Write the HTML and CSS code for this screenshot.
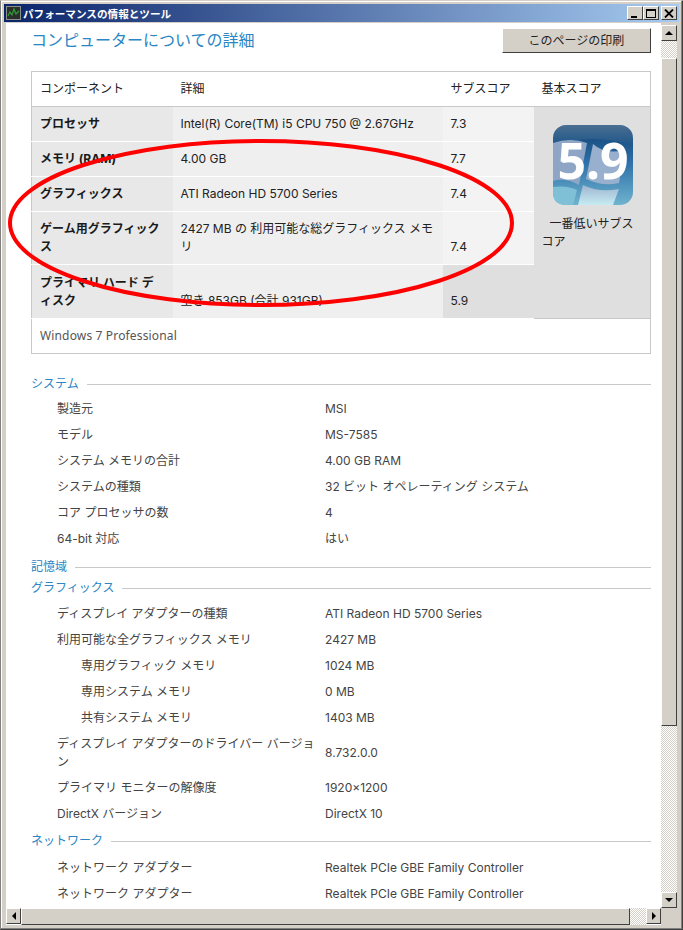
FILE: index.html
```html
<!DOCTYPE html>
<html lang="ja">
<head>
    <meta charset="UTF-8">
    <title>パフォーマンスの情報とツール</title>
    <link rel="stylesheet" href="styles.css">
</head>
<body>
    <div class="window">
        <div class="titlebar">
            <svg class="app-icon" width="15" height="14" viewBox="0 0 15 14">
                <rect x="0.5" y="0.5" width="14" height="13" fill="#2b2f2b" stroke="#8a8f8a"/>
                <path d="M2 10 L4 6 L6 9 L8 3 L10 8 L13 5" fill="none" stroke="#2f9e35" stroke-width="1.2"/>
            </svg>
            <span class="title-text">パフォーマンスの情報とツール</span>
            <div class="caption-buttons">
                <div class="caption-btn"><span class="glyph-min"></span></div>
                <div class="caption-btn"><span class="glyph-max"></span></div>
                <div class="caption-btn caption-close">
                    <svg width="10" height="9" viewBox="0 0 10 9"><path d="M1 0.5 L9 8.5 M9 0.5 L1 8.5" stroke="#000" stroke-width="1.8"/></svg>
                </div>
            </div>
        </div>

        <div class="client">
            <div class="main-row">
                <div class="content">
                    <div class="page-head">
                        <h1 class="page-title">コンピューターについての詳細</h1>
                        <div class="print-btn">このページの印刷</div>
                    </div>

                    <!-- スコア表 -->
                    <table class="score-table">
                        <colgroup>
                            <col class="col-name"><col class="col-detail"><col class="col-sub"><col class="col-base">
                        </colgroup>
                        <tr class="head-row">
                            <td>コンポーネント</td><td>詳細</td><td>サブスコア</td><td>基本スコア</td>
                        </tr>
                        <tr class="row-short">
                            <td class="name">プロセッサ</td>
                            <td class="detail">Intel(R) Core(TM) i5 CPU 750 @ 2.67GHz</td>
                            <td class="sub">7.3</td>
                            <td class="base" rowspan="5">
                                <svg class="score-logo" width="80" height="80" viewBox="0 0 80 80">
                                    <defs>
                                        <linearGradient id="tile" x1="0" y1="0" x2="0" y2="1">
                                            <stop offset="0" stop-color="#0f3f6e"/>
                                            <stop offset="0.45" stop-color="#2c6ea6"/>
                                            <stop offset="1" stop-color="#6fb3cf"/>
                                        </linearGradient>
                                        <linearGradient id="pane" x1="0" y1="0" x2="0" y2="1">
                                            <stop offset="0" stop-color="#9fb4cf"/>
                                            <stop offset="1" stop-color="#c6ecf2"/>
                                        </linearGradient>
                                        <linearGradient id="shine" x1="0" y1="0" x2="0" y2="1">
                                            <stop offset="0" stop-color="#ffffff" stop-opacity="0.25"/>
                                            <stop offset="1" stop-color="#ffffff" stop-opacity="0"/>
                                        </linearGradient>
                                    </defs>
                                    <rect width="80" height="80" rx="13" fill="url(#tile)"/>
                                    <path d="M0 18 Q18 12 34 18 L26 60 Q12 52 0 56 Z" fill="#8ea5c6"/>
                                    <path d="M40 19 Q52 30 72 25 L66 58 Q50 62 33 54 Z" fill="#98afce"/>
                                    <path d="M24 65 Q14 60 0 62 L0 68 Q0 80 13 80 L20 80 Z" fill="#7fc0d6"/>
                                    <path d="M30 60 Q46 68 66 64 L60 80 L25 80 Z" fill="url(#pane)"/>
                                    <path d="M0 13 Q0 0 13 0 H67 Q80 0 80 13 V20 Q40 8 0 20 Z" fill="url(#shine)"/>
                                    <text x="40" y="54" class="logo-score">5.9</text>
                                </svg>
                                <p class="base-note">一番低いサブスコア</p>
                            </td>
                        </tr>
                        <tr class="row-short">
                            <td class="name">メモリ (RAM)</td><td class="detail">4.00 GB</td><td class="sub">7.7</td>
                        </tr>
                        <tr class="row-short">
                            <td class="name">グラフィックス</td><td class="detail">ATI Radeon HD 5700 Series</td><td class="sub">7.4</td>
                        </tr>
                        <tr class="row-tall">
                            <td class="name">ゲーム用グラフィックス</td>
                            <td class="detail">2427 MB の 利用可能な総グラフィックス メモリ</td>
                            <td class="sub sub-bottom">7.4</td>
                        </tr>
                        <tr class="row-tall row-disk">
                            <td class="name">プライマリ ハード ディスク</td>
                            <td class="detail sub-bottom">空き 853GB (合計 931GB)</td>
                            <td class="sub sub-bottom sub-low">5.9</td>
                        </tr>
                        <tr class="foot-row">
                            <td colspan="4">Windows 7 Professional</td>
                        </tr>
                    </table>

                    <!-- 詳細リスト -->
                    <div class="sections">
                        <div class="sec-head sec-first"><span>システム</span></div>
                        <div class="info-row"><span>製造元</span><span>MSI</span></div>
                        <div class="info-row"><span>モデル</span><span>MS-7585</span></div>
                        <div class="info-row"><span>システム メモリの合計</span><span>4.00 GB RAM</span></div>
                        <div class="info-row"><span>システムの種類</span><span>32 ビット オペレーティング システム</span></div>
                        <div class="info-row"><span>コア プロセッサの数</span><span>4</span></div>
                        <div class="info-row"><span>64-bit 対応</span><span>はい</span></div>

                        <div class="sec-head sec-plain"><span>記憶域</span></div>
                        <div class="sec-head sec-tight"><span>グラフィックス</span></div>
                        <div class="info-row"><span>ディスプレイ アダプターの種類</span><span>ATI Radeon HD 5700 Series</span></div>
                        <div class="info-row"><span>利用可能な全グラフィックス メモリ</span><span>2427 MB</span></div>
                        <div class="info-row info-sub"><span>専用グラフィック メモリ</span><span>1024 MB</span></div>
                        <div class="info-row info-sub"><span>専用システム メモリ</span><span>0 MB</span></div>
                        <div class="info-row info-sub"><span>共有システム メモリ</span><span>1403 MB</span></div>
                        <div class="info-row info-wrap"><span>ディスプレイ アダプターのドライバー バージョン</span><span>8.732.0.0</span></div>
                        <div class="info-row"><span>プライマリ モニターの解像度</span><span>1920x1200</span></div>
                        <div class="info-row"><span>DirectX バージョン</span><span>DirectX 10</span></div>

                        <div class="sec-head sec-last"><span>ネットワーク</span></div>
                        <div class="info-row"><span>ネットワーク アダプター</span><span>Realtek PCIe GBE Family Controller</span></div>
                        <div class="info-row"><span>ネットワーク アダプター</span><span>Realtek PCIe GBE Family Controller</span></div>
                    </div>
                </div>

                <div class="vscroll">
                    <div class="sb-btn"><span class="arrow arrow-up"></span></div>
                    <div class="sb-track sb-track-top"></div>
                    <div class="sb-thumb sb-thumb-v"></div>
                    <div class="sb-track sb-fill"></div>
                    <div class="sb-btn"><span class="arrow arrow-down"></span></div>
                </div>
            </div>

            <div class="hscroll">
                <div class="sb-btn sb-btn-h"><span class="arrow arrow-left"></span></div>
                <div class="sb-thumb sb-thumb-h"></div>
                <div class="sb-track sb-fill"></div>
                <div class="sb-btn sb-btn-h"><span class="arrow arrow-right"></span></div>
                <div class="sb-corner"></div>
            </div>
        </div>

        <!-- 赤い丸印 -->
        <svg class="red-mark" width="683" height="930" viewBox="0 0 683 930">
            <ellipse cx="261" cy="222" rx="251" ry="82" fill="none" stroke="#ff0000" stroke-width="4"/>
        </svg>
    </div>
</body>
</html>
```

FILE: styles.css
```css
* {
    box-sizing: border-box;
    margin: 0;
    padding: 0;
}
html, body {
    width: 683px;
    height: 930px;
    overflow: hidden;
    font-family: "Inter", "Noto Sans CJK JP", sans-serif;
    font-size: 12px;
    color: #222;
}
.window {
    position: relative;
    width: 683px;
    height: 930px;
    display: flex;
    flex-direction: column;
    background-color: #d4d0c8;
    border: 1px solid #404040;
    border-top-color: #d4d0c8;
    border-left-color: #808080;
    padding: 3px 3px 4px 3px;
    box-shadow: inset -1px -1px 0 #808080, inset 1px 1px 0 #ffffff;
}

/* タイトルバー */
.titlebar {
    height: 18px;
    flex: none;
    display: flex;
    align-items: center;
    padding: 0 2px 0 2px;
    background: linear-gradient(to right, #0a246a, #a6caf0);
}
.app-icon {
    flex: none;
    margin-right: 2px;
}
.title-text {
    color: #fff;
    font-weight: bold;
    font-size: 10.6px;
    font-family: "Noto Sans CJK JP", sans-serif;
}
.caption-buttons {
    margin-left: auto;
    display: flex;
}
.caption-btn {
    width: 16px;
    height: 14px;
    display: flex;
    align-items: center;
    justify-content: center;
    background-color: #d4d0c8;
    border: 1px solid;
    border-color: #fff #404040 #404040 #fff;
}
.caption-close {
    margin-left: 2px;
}
.glyph-min {
    width: 6px;
    height: 2px;
    margin-top: 7px;
    margin-right: 2px;
    background-color: #000;
}
.glyph-max {
    width: 10px;
    height: 9px;
    border: 1px solid #000;
    border-top-width: 2px;
}

.client {
    flex: 1;
    min-height: 0;
    display: flex;
    flex-direction: column;
    margin-left: 2px;
}
.main-row {
    flex: 1;
    min-height: 0;
    display: flex;
}
.content {
    flex: 1;
    min-width: 0;
    background-color: #fff;
    padding: 0 9px 0 25px;
    overflow: hidden;
    margin-top: 1px;
}

/* ページ見出し */
.page-head {
    display: flex;
    justify-content: space-between;
    align-items: flex-start;
    width: 620px;
    height: 48px;
}
.page-title {
    font-size: 16px;
    font-weight: normal;
    color: #2a86c4;
    line-height: 24px;
    margin-top: 5px;
}
.print-btn {
    width: 149px;
    height: 25px;
    margin-top: 5px;
    line-height: 23px;
    text-align: center;
    background-color: #d4d0c8;
    border: 1px solid;
    border-color: #fff #404040 #404040 #fff;
    color: #222;
}

/* スコア表 */
.score-table {
    width: 620px;
    table-layout: fixed;
    border-collapse: collapse;
    border: 1px solid #c8c8c8;
}
.col-name { width: 141px; }
.col-detail { width: 270px; }
.col-sub { width: 91px; }
.col-base { width: 117px; }
.score-table td {
    padding: 0 8px;
    line-height: 18px;
    border-bottom: 1px solid #fff;
}
.head-row {
    height: 35px;
}
.head-row td {
    border-bottom: 1px solid #c8c8c8;
}
.row-short { height: 35px; }
.row-tall { height: 53px; }
.row-disk { height: 54px; }
.name {
    background-color: #e8e8e8;
    font-weight: bold;
    color: #1a1a1a;
}
.detail {
    background-color: #efefef;
}
.sub {
    background-color: #f3f3f3;
}
.sub-bottom {
    vertical-align: bottom;
    padding-bottom: 8px !important;
}
.sub-low {
    background-color: #dfdfdf;
}
.score-table .base {
    background-color: #dfdfdf;
    vertical-align: top;
    padding: 18px 8px 0 8px;
    border-bottom: none;
}
.score-logo {
    display: block;
    margin: 0 auto 0 11px;
}
.logo-score {
    font-family: "Noto Sans", sans-serif;
    font-size: 50px;
    font-weight: bold;
    fill: #fff;
    text-anchor: middle;
}
.base-note {
    margin-top: 10px;
    text-indent: 8px;
    line-height: 18px;
}
.foot-row {
    height: 35px;
}
.foot-row td {
    color: #555;
    border-top: 1px solid #c8c8c8;
    border-bottom: none;
    font-family: "Noto Sans", sans-serif;
    letter-spacing: 0.15px;
}

/* 詳細リスト */
.sections {
    width: 620px;
    margin-top: 17px;
    color: #444;
}
.sec-head {
    display: flex;
    align-items: center;
    height: 22px;
    margin-top: 3px;
    margin-bottom: 3px;
    color: #2a86c4;
}
.sec-head::after {
    content: "";
    flex: 1;
    height: 1px;
    margin-left: 8px;
    margin-top: 4px;
    background-color: #c8c8c8;
}
.sec-first {
    margin-top: 0;
}
.sec-plain {
    margin-bottom: 0;
    height: 21px;
}
.sec-tight {
    margin-top: -1px;
    margin-bottom: 4px;
}
.sec-last {
    margin-top: 1px;
    margin-bottom: 5px;
}
.info-row {
    display: grid;
    grid-template-columns: 268px 1fr;
    align-items: center;
    width: 620px;
    min-height: 26px;
    padding-left: 26px;
    line-height: 18px;
}
.info-sub {
    grid-template-columns: 244px 1fr;
    padding-left: 50px;
}
.info-wrap {
    min-height: 44px;
}

/* スクロールバー */
.vscroll {
    width: 16px;
    flex: none;
    display: flex;
    flex-direction: column;
    margin: 3px 2px 0 0;
}
.hscroll {
    height: 17px;
    flex: none;
    display: flex;
    background-color: #fff;
    margin-right: 2px;
}
.sb-btn {
    width: 16px;
    height: 16px;
    flex: none;
    display: flex;
    align-items: center;
    justify-content: center;
    background-color: #d4d0c8;
    border: 1px solid;
    border-color: #fff #404040 #404040 #fff;
}
.sb-btn-h {
    width: 15px;
}
.sb-thumb {
    flex: none;
    background-color: #d4d0c8;
    border: 1px solid;
    border-color: #fff #404040 #404040 #fff;
}
.sb-thumb-v {
    height: 668px;
}
.sb-thumb-h {
    width: 609px;
}
.sb-track {
    background: repeating-conic-gradient(#d4d0c8 0 25%, #fff 0 50%) 0 0 / 2px 2px;
}
.sb-track-top {
    height: 17px;
    flex: none;
}
.sb-fill {
    flex: 1;
}
.sb-corner {
    width: 16px;
    flex: none;
    background-color: #d4d0c8;
}
.arrow {
    width: 0;
    height: 0;
    border-style: solid;
    border-color: transparent;
}
.arrow-up {
    border-width: 0 4px 4px 4px;
    border-bottom-color: #000;
}
.arrow-down {
    border-width: 4px 4px 0 4px;
    border-top-color: #000;
}
.arrow-left {
    border-width: 4px 4px 4px 0;
    border-right-color: #000;
}
.arrow-right {
    border-width: 4px 0 4px 4px;
    border-left-color: #000;
}

/* 赤い丸印 */
.red-mark {
    position: absolute;
    left: -1px;
    top: 0;
    pointer-events: none;
}
```
